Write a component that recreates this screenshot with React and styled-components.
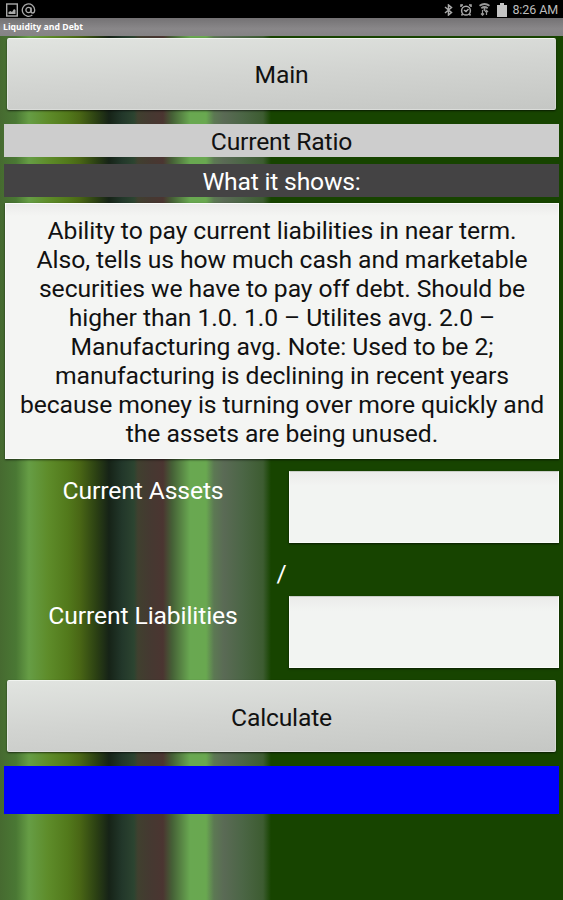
import React, { Component } from 'react'
import styled, { createGlobalStyle } from 'styled-components'

const GlobalStyle = createGlobalStyle`
  * {
    box-sizing: border-box;
  }
  body {
    margin: 0;
    font-family: Roboto, "Liberation Sans", sans-serif;
  }
`

const StyledApp = styled.div`
  display: flex;
  flex-direction: column;
  height: 900px;
  overflow: hidden;
  background: linear-gradient(
    to right,
    #466a30 0,
    #4a7834 16px,
    #669d45 29px,
    #5e8c2a 48px,
    #52791b 68px,
    #496615 80px,
    #2c4113 96px,
    #162317 109px,
    #22372a 122px,
    #2c4430 134px,
    #40402f 138px,
    #453931 150px,
    #4b3531 163px,
    #456036 172px,
    #69a851 190px,
    #69a850 206px,
    #5c7953 214px,
    #5a6a55 224px,
    #4c6646 242px,
    #3d5c31 263px,
    #174400 271px
  );
`

const StyledStatusBar = styled.div`
  display: flex;
  flex: none;
  align-items: center;
  justify-content: space-between;
  height: 18px;
  padding: 1px 5px 0 6px;
  background: black;
  color: #bdbdbd;
  font-size: 12.5px;
`

const StyledIcons = styled.div`
  display: flex;
  align-items: center;
  gap: ${props => props.gap}px;
`

const StyledClock = styled.span`
  margin-left: -2px;
  letter-spacing: -0.1px;
  line-height: 17px;
`

const StyledTitleBar = styled.div`
  flex: none;
  height: 18px;
  padding-left: 3px;
  background: linear-gradient(#747274, #898789 60%, #858385);
  color: white;
  font-family: "Open Sans", sans-serif;
  font-size: 8.7px;
  font-weight: bold;
  line-height: 18px;
`

const StyledForm = styled.div`
  display: flex;
  flex-direction: column;
  padding: 2px 4px 0;
`

const StyledButton = styled.button`
  height: 72px;
  margin: 0 3px;
  padding: 0;
  border: 1px solid;
  border-color: #f1f4f0 #d5d9d4 #dadcd9 #e2e6e1;
  border-radius: 2px;
  background: linear-gradient(177deg, #e1e4e0, #d2d4d1 50%, #c5c7c4);
  box-shadow: 0 1px 2px rgba(0, 0, 0, 0.6);
  color: #111;
  font-family: inherit;
  font-size: 24.7px;
  letter-spacing: -0.2px;
`

const StyledBand = styled.div`
  height: 33px;
  margin-top: ${props => props.gap}px;
  background: ${props => (props.dark ? '#444344' : '#cdcdcd')};
  color: ${props => (props.dark ? 'white' : '#111')};
  font-size: 24.7px;
  letter-spacing: -0.2px;
  line-height: 36px;
  text-align: center;
`

const StyledDescription = styled.div`
  height: 256px;
  margin: 6px 0 0 1px;
  padding-top: 12px;
  border: 1px solid #fafbfa;
  background: linear-gradient(#ebebea, #f4f5f3 12px);
  box-shadow: 0 1px 2px rgba(0, 0, 0, 0.6);
  color: #111;
  font-size: 24.7px;
  letter-spacing: -0.07px;
  line-height: 29px;
  text-align: center;
  white-space: nowrap;
`

const StyledField = styled.label`
  display: grid;
  grid-template-columns: 278px 1fr;
  gap: 7px;
  height: 72px;
  margin-top: ${props => props.gap}px;
  color: white;
  font-size: 24.7px;
  letter-spacing: -0.12px;
  line-height: 39px;
  text-align: center;
`

const StyledInput = styled.input`
  width: 100%;
  height: 72px;
  border: 1px solid;
  border-color: #c9cdc8 #fafbfa #fafbfa #fafbfa;
  background: linear-gradient(#ebebea, #f2f4f2 14px);
  box-shadow: 0 1px 2px rgba(0, 0, 0, 0.6);
  font-size: 24px;
  outline: none;
`

const StyledDivider = styled.div`
  height: 53px;
  padding-top: 16px;
  color: white;
  font-size: 24.7px;
  line-height: 30px;
  text-align: center;
`

const StyledResult = styled.div`
  height: 48px;
  margin-top: 14px;
  background: #0000fe;
`

const description = [
  'Ability to pay current liabilities in near term.',
  'Also, tells us how much cash and marketable',
  'securities we have to pay off debt. Should be',
  'higher than 1.0. 1.0 – Utilites avg. 2.0 –',
  'Manufacturing avg. Note: Used to be 2;',
  'manufacturing is declining in recent years',
  'because money is turning over more quickly and',
  'the assets are being unused.',
]

const StyledLine = styled.div``

const StyledCalculate = styled(StyledButton)`
  margin-top: 12px;
  padding-top: 2px;
`

class StatusBar extends Component {
  render() {
    return (
      <StyledStatusBar>
        <StyledIcons gap={3}>
          <svg width="12" height="14" viewBox="0 0 12 14" fill="none" stroke="#aaa">
            <rect x="0.7" y="1" width="10.6" height="12" strokeWidth="1.4" />
            <path d="M2.5 11V9l2-1 1.5 1 2-3 1.5 1v4z" fill="#aaa" stroke="none" />
          </svg>
          <svg width="15" height="14" viewBox="0 0 14 14" fill="none" stroke="#aaa">
            <path d="M10.8 12A6.2 6.2 0 1 1 13.2 7c0 2-1 3-2.1 3S9.5 9 9.5 8V4.5" strokeWidth="1.3" />
            <circle cx="7" cy="7" r="2.6" strokeWidth="1.3" />
          </svg>
        </StyledIcons>
        <StyledIcons gap={7}>
          <svg width="9" height="12" viewBox="0 0 9 12" fill="none" stroke="#aaa" strokeWidth="1.5">
            <path d="M1 3l6.5 5.5L4.5 11V1l3 2.5L1 9" />
          </svg>
          <svg width="12" height="12" viewBox="0 0 12 12" fill="none" stroke="#aaa" strokeWidth="1.5">
            <circle cx="6" cy="6.7" r="4.4" />
            <path d="M1 3V1h2M11 3V1H9M4 6l2 1.5L8.5 5M2.5 10l-1 1.5M9.5 10l1 1.5" />
          </svg>
          <svg width="11" height="13" viewBox="0 0 11 13" fill="none" stroke="#999" strokeWidth="1.8">
            <path d="M0.5 2.8Q5.5-0.8 10.5 2.8M2.3 5.2Q5.5 2.8 8.7 5.2" />
            <path d="M5.5 5v3" />
            <path d="M3.5 7v5M2 10.5l1.5 1.7L5 10.5M7.5 12V7.5M6 9l1.5-1.7L9 9" strokeWidth="1.2" />
          </svg>
          <svg width="10" height="14" viewBox="0 0 10 14" fill="#c4c4c4">
            <path d="M3 0h4v2h3v12H0V2h3z" />
          </svg>
          <StyledClock>8:26 AM</StyledClock>
        </StyledIcons>
      </StyledStatusBar>
    )
  }
}

export default class App extends Component {
  renderDescription() {
    return description.map((line, index) => (
      <StyledLine key={index}>{line}</StyledLine>
    ))
  }

  render() {
    return (
      <StyledApp>
        <GlobalStyle />
        <StatusBar />
        <StyledTitleBar>Liquidity and Debt</StyledTitleBar>
        <StyledForm>
          <StyledButton>Main</StyledButton>
          <StyledBand gap={14}>Current Ratio</StyledBand>
          <StyledBand dark gap={7}>
            What it shows:
          </StyledBand>
          <StyledDescription>{this.renderDescription()}</StyledDescription>
          <StyledField gap={12}>
            Current Assets
            <StyledInput />
          </StyledField>
          <StyledDivider>/</StyledDivider>
          <StyledField gap={0}>
            Current Liabilities
            <StyledInput />
          </StyledField>
          <StyledCalculate>Calculate</StyledCalculate>
          <StyledResult />
        </StyledForm>
      </StyledApp>
    )
  }
}
